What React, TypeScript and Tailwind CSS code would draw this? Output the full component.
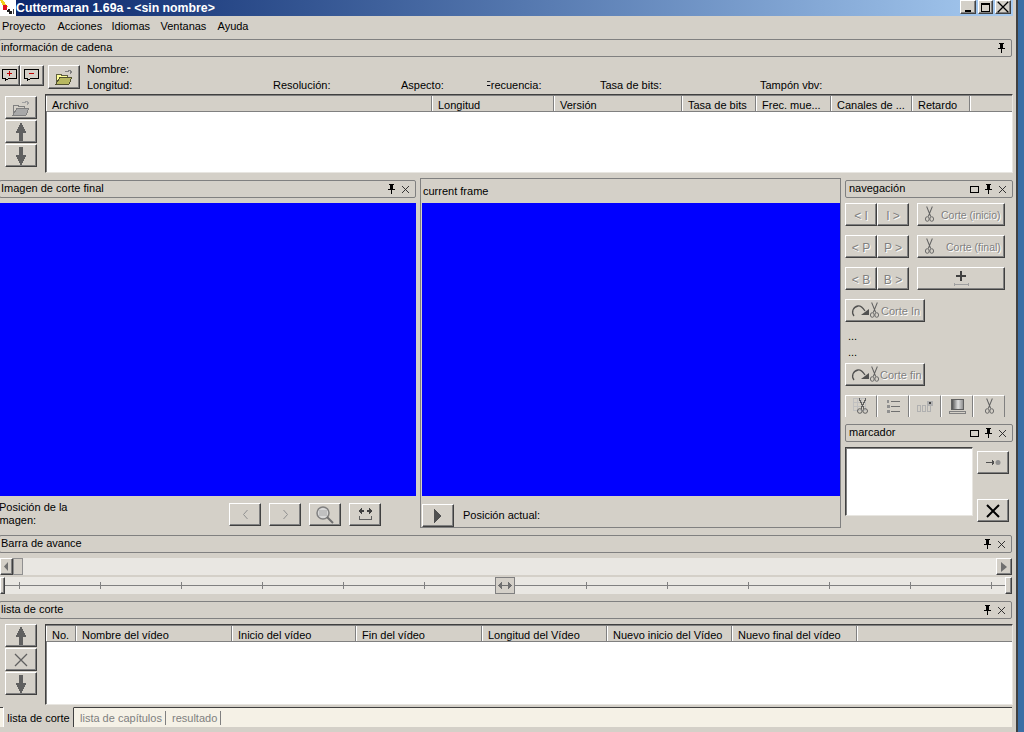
import React from "react";

const raised = "border border-t-white border-l-white border-r-[#404040] border-b-[#404040] shadow-[inset_-1px_-1px_0_#808080]";

function Btn({ w = 32, h = 23, className = "", children }: { w?: number; h?: number; className?: string; children?: React.ReactNode }) {
  return (
    <div className={`${raised} flex shrink-0 items-center justify-center bg-[#d4d0c8] ${className}`} style={{ width: w, height: h }}>
      {children}
    </div>
  );
}

const Pin = () => (
  <svg width="9" height="10" viewBox="0 0 9 10" shapeRendering="crispEdges">
    <path d="M2 0h5v1H6v4h2v1H1V5h2V1H2zM4 6h1v4H4z" fill="#000" />
    <path d="M5 1h1v4H5z" fill="#000" />
  </svg>
);
const Close = () => (
  <svg width="9" height="9" viewBox="0 0 9 9">
    <path d="M1 1l7 7M8 1L1 8" stroke="#222" strokeWidth="0.9" fill="none" />
  </svg>
);
const Float = () => <div className="h-[7px] w-[9px] border border-black" />;

function Dock({ title, w, pin = true, close = true, float = false, left = false }: { title: string; w: number; pin?: boolean; close?: boolean; float?: boolean; left?: boolean }) {
  return (
    <div className={`flex h-[18px] shrink-0 items-center justify-between rounded-[2px] border border-[#808080] pr-[5px] ${left ? "pl-[1px]" : "pl-[3px]"}`} style={{ width: w }}>
      <span className="-translate-y-px text-black">{title}</span>
      <div className="flex items-center gap-[5px]">
        {float && <Float />}
        {pin && <Pin />}
        {close && <Close />}
      </div>
    </div>
  );
}

const Up = ({ c = "#606060" }: { c?: string }) => (
  <svg width="12" height="18" viewBox="0 0 12 18" shapeRendering="crispEdges">
    <path d="M5 0h2v2h1v2h1v2h1v2h1v2H8v8H4v-8H1V8h1V6h1V4h1V2h1z" fill={c} />
  </svg>
);
const Down = ({ c = "#606060" }: { c?: string }) => (
  <svg width="12" height="18" viewBox="0 0 12 18" shapeRendering="crispEdges">
    <path d="M4 0h4v8h3v2h-1v2H9v2H8v2H7v2H5v-2H4v-2H3v-2H2v-2H1V8h3z" fill={c} />
  </svg>
);
const BigX = ({ c = "#000", s = 1.6 }: { c?: string; s?: number }) => (
  <svg width="16" height="16" viewBox="0 0 16 16">
    <path d="M2 2l12 12M14 2L2 14" stroke={c} strokeWidth={s} fill="none" />
  </svg>
);
const FolderOpen = ({ gray = false }: { gray?: boolean }) => (
  <svg width="18" height="16" viewBox="0 0 18 16" shapeRendering="crispEdges">
    <path d="M10 2h3V1h2v1h1v1h1M15 3v2" stroke={gray ? "#a0a0a0" : "#808080"} fill="none" />
    <path d="M1 5h5v1h6v2H5L2 14H1z" fill={gray ? "#d4d0c8" : "#ffff99"} stroke={gray ? "#808080" : "#606040"} strokeWidth="1" />
    <path d="M5 8h12l-3 7H1z" fill={gray ? "#a8a8a8" : "#b8b860"} stroke={gray ? "#808080" : "#505030"} strokeWidth="1" />
  </svg>
);
const Scissors = ({ c = "#606060" }: { c?: string }) => (
  <svg width="9" height="17" viewBox="0 0 11 17" preserveAspectRatio="none" className="shrink-0">
    <path d="M2 0.5l5 10M9 0.5l-5 10" stroke={c} strokeWidth="1.2" fill="none" />
    <circle cx="2.8" cy="13" r="2.3" stroke={c} fill="none" />
    <circle cx="8.2" cy="13" r="2.3" stroke={c} fill="none" />
  </svg>
);
const Curve = () => (
  <svg width="19" height="14" viewBox="0 0 19 14" className="shrink-0">
    <path d="M3 12C0 8 2 3 7 2c3-.5 5 2 7 5" stroke="#505050" strokeWidth="1.3" fill="none" />
    <path d="M10 11h8V5z" fill="#505050" />
  </svg>
);

const dis = "translate-y-px text-[#808080] [text-shadow:1px_1px_0_#fff]";

function HeaderRow({ cols, rest }: { cols: [string, number][]; rest: number }) {
  return (
    <div className="flex h-[16px] shrink-0 border-b border-[#808080] bg-[#d4d0c8]">
      {cols.map(([t, w]) => (
        <div key={t} className="flex shrink-0 items-center truncate border-r border-r-[#808080] border-l border-l-white pt-[4px] pl-[5px] text-black" style={{ width: w }}>
          <span className="whitespace-nowrap">{t}</span>
        </div>
      ))}
      <div className="border-l border-l-white" style={{ width: rest }} />
    </div>
  );
}

function Table({ cols, rest, h }: { cols: [string, number][]; rest: number; h: number }) {
  return (
    <div className="flex w-[968px] flex-col overflow-hidden border border-t-[#404040] border-l-[#404040] border-r-[#e8e6e1] border-b-[#e8e6e1] bg-white shadow-[inset_1px_1px_0_#808080]" style={{ height: h }}>
      <div className="h-[1px] shrink-0" />
      <HeaderRow cols={cols} rest={rest} />
    </div>
  );
}

const Ticks = () => {
  const xs = [19, 100, 181, 262, 343, 424, 586, 667, 748, 829, 910, 991];
  return (
    <>
      {xs.map((x) => (
        <div key={x} className="absolute top-[5px] h-[7px] w-px bg-[#808080]" style={{ left: x }} />
      ))}
    </>
  );
};

const Chevron = ({ dir }: { dir: "l" | "r" }) => (
  <svg width="7" height="11" viewBox="0 0 7 11">
    <path d={dir === "l" ? "M5.5 1L1.5 5.5 5.5 10" : "M1.5 1L5.5 5.5 1.5 10"} stroke="#909090" strokeWidth="1" fill="none" />
  </svg>
);

export default function App() {
  return (
    <div className="flex h-[732px] w-[1024px] overflow-hidden bg-[#d4d0c8] font-['Liberation_Sans',sans-serif] text-[11px] leading-none text-black">
      <div className="flex w-[1016px] shrink-0 flex-col">
        {/* Title bar */}
        <div className="flex h-[16px] w-[1013px] shrink-0 items-center bg-gradient-to-r from-[#0a246a] to-[#a6caf0] pr-[2px]">
          <div className="flex h-[16px] w-[16px] shrink-0 items-center justify-center bg-white">
            <svg width="16" height="16" viewBox="0 0 16 16" shapeRendering="crispEdges">
              <path d="M0 0l3 0 5 7-3 2z" fill="#f0d020" />
              <path d="M3 5h4v5H3z" fill="#e01020" />
              <path d="M8 9h2v2h2v3H9v-2H7v-2h1z" fill="#202020" />
              <path d="M13 9h1v5h-1z" fill="#404040" />
            </svg>
          </div>
          <span className="text-[12.3px] font-bold whitespace-nowrap text-white">Cuttermaran 1.69a - &lt;sin nombre&gt;</span>
          <div className="ml-auto flex items-start self-start">
            <Btn w={16} h={14} className="items-end pb-[1px]"><div className="h-[2px] w-[6px] bg-black" /></Btn>
            <Btn w={15} h={14} className="ml-[2px]"><div className="h-[9px] w-[9px] border border-black border-t-2" /></Btn>
            <Btn w={16} h={14} className="ml-[2px]"><BigX s={1.5} /></Btn>
          </div>
        </div>

        {/* Menu */}
        <div className="flex h-[21px] shrink-0 items-center pl-[2px]">
          <span className="w-[55.5px]">Proyecto</span>
          <span className="w-[54px]">Acciones</span>
          <span className="w-[49px]">Idiomas</span>
          <span className="w-[57px]">Ventanas</span>
          <span>Ayuda</span>
        </div>

        {/* Información de cadena */}
        <div className="mt-[2px] -ml-px">
          <Dock title="información de cadena" w={1013} close={false} left />
        </div>
        <div className="flex h-[37px] shrink-0 items-start">
          <div className="mt-[8px] flex">
            <Btn w={21} h={21} className="-ml-px">
              <svg width="16" height="13" viewBox="0 0 16 13" shapeRendering="crispEdges">
                <path d="M0.5 .5h14v9h-8l-3 2v-2h-3z" stroke="#000" fill="#d4d0c8" />
                <path d="M7 2h1v2h2v1H8v2H7V5H5V4h2z" fill="#c00000" />
              </svg>
            </Btn>
            <Btn w={24} h={21}>
              <svg width="16" height="13" viewBox="0 0 16 13" shapeRendering="crispEdges">
                <path d="M0.5 .5h14v9h-8l-3 2v-2h-3z" stroke="#000" fill="#d4d0c8" />
                <path d="M5 4h5v1H5z" fill="#c00000" />
              </svg>
            </Btn>
            <Btn w={32} h={24} className="ml-[4px]"><FolderOpen /></Btn>
          </div>
          <div className="mt-[4px] ml-[7px] flex flex-col">
            <div className="flex h-[16px] items-center">Nombre:</div>
            <div className="flex h-[16px] items-center">
              <span className="w-[186px]">Longitud:</span>
              <span className="w-[128px]">Resolución:</span>
              <span className="w-[86px]">Aspecto:</span>
              <span className="w-[113px] overflow-hidden"><span className="-ml-[3px] inline-block">Frecuencia:</span></span>
              <span className="w-[160px]">Tasa de bits:</span>
              <span>Tampón vbv:</span>
            </div>
          </div>
        </div>

        {/* Files table */}
        <div className="flex h-[84px] shrink-0 items-start">
          <div className="mt-[2px] ml-[5px] flex w-[40px] shrink-0 flex-col gap-[1px]">
            <Btn><FolderOpen gray /></Btn>
            <Btn><Up /></Btn>
            <Btn><Down /></Btn>
          </div>
          <Table
            h={79}
            rest={41}
            cols={[
              ["Archivo", 386],
              ["Longitud", 122],
              ["Versión", 128],
              ["Tasa de bits", 74],
              ["Frec. mue...", 75],
              ["Canales de ...", 81],
              ["Retardo", 58],
            ]}
          />
        </div>

        {/* Main panels */}
        <div className="flex h-[357px] shrink-0 items-start">
          <div className="flex w-[420px] shrink-0 flex-col pt-[2px]">
            <div className="-ml-px"><Dock title="Imagen de corte final" w={417} float={false} left /></div>
            <div className="mt-[5px] h-[293px] w-[416px] bg-[#0000ff]" />
            <div className="flex h-[31px] items-start">
              <div className="mt-[6px] -ml-px flex w-[230px] shrink-0 flex-col gap-[2px] leading-[11px]">
                <span>Posición de la</span>
                <span className="-ml-[1px]"><span className="-ml-[1px]">imagen:</span></span>
              </div>
              <div className="mt-[7px] flex gap-[8px]">
                <Btn><Chevron dir="l" /></Btn>
                <Btn><Chevron dir="r" /></Btn>
                <Btn>
                  <svg width="20" height="18" viewBox="0 0 20 18">
                    <circle cx="8" cy="7" r="6" fill="#d8d8d8" stroke="#808080" strokeWidth="1.5" />
                    <path d="M4 7h8M4 5h8M4 9h8" stroke="#a8a8a8" />
                    <path d="M12 11l6 6" stroke="#707070" strokeWidth="2" />
                  </svg>
                </Btn>
                <Btn>
                  <svg width="17" height="14" viewBox="0 0 17 14" shapeRendering="crispEdges">
                    <path d="M4 0h1v6H4zM3 1h1v4H3zM2 2h1v2H2zM5 2h2v2H5zM12 0h1v6h-1zM13 1h1v4h-1zM14 2h1v2h-1zM10 2h2v2h-2z" fill="#404040" />
                    <path d="M2 8h1v3h11V8h1v4H2z" fill="#606060" />
                  </svg>
                </Btn>
              </div>
            </div>
          </div>

          <div className="flex h-[350px] w-[421px] shrink-0 flex-col border border-[#808080] pl-[1px]">
            <div className="flex h-[24px] shrink-0 items-center pt-[1px] pl-[1px]">current frame</div>
            <div className="h-[293px] w-[418px] bg-[#0000ff]" />
            <div className="mt-[8px] flex h-[23px] items-center">
              <Btn>
                <svg width="10" height="14" viewBox="0 0 10 14" shapeRendering="crispEdges"><path d="M1 0l8 7-8 7z" fill="#505050" /></svg>
              </Btn>
              <span className="ml-[9px]">Posición actual:</span>
            </div>
          </div>

          <div className="ml-[4px] flex w-[168px] shrink-0 flex-col pt-[2px]">
            <Dock title="navegación" w={168} float />
            <div className="mt-[5px] flex h-[23px]">
              <Btn><span className={`${dis} text-[12px]`}>&lt; I</span></Btn>
              <Btn><span className={`${dis} text-[12px]`}>I &gt;</span></Btn>
              <Btn w={88} className="ml-[8px] justify-start pl-[7px]"><Scissors /><span className={`${dis} ml-[7px] whitespace-nowrap text-[10.5px]`}>Corte (inicio)</span></Btn>
            </div>
            <div className="mt-[9px] flex h-[23px]">
              <Btn><span className={`${dis} text-[12px]`}>&lt; P</span></Btn>
              <Btn><span className={`${dis} text-[12px]`}>P &gt;</span></Btn>
              <Btn w={88} className="ml-[8px] justify-start pl-[7px]"><Scissors /><span className={`${dis} ml-[12px] whitespace-nowrap text-[10.5px]`}>Corte (final)</span></Btn>
            </div>
            <div className="mt-[9px] flex h-[23px]">
              <Btn><span className={`${dis} text-[12px]`}>&lt; B</span></Btn>
              <Btn><span className={`${dis} text-[12px]`}>B &gt;</span></Btn>
              <Btn w={88} className="ml-[8px]">
                <svg width="17" height="15" viewBox="0 0 17 15" shapeRendering="crispEdges">
                  <path d="M7 0h2v4h4v2H9v4H7V6H3V4h4z" fill="#404040" />
                  <path d="M1 12h1v1h13v-1h1v3h-1v-1H2v1H1z" fill="#a0a0a0" />
                </svg>
              </Btn>
            </div>
            <Btn w={80} className="mt-[9px] justify-start pl-[5px]"><Curve /><Scissors /><span className={`${dis} ml-[2px] whitespace-nowrap`}>Corte In</span></Btn>
            <div className="mt-[6px] flex h-[16px] items-center pl-[3px]">...</div>
            <div className="flex h-[16px] items-center pl-[3px]">...</div>
            <Btn w={80} className="mt-[3px] justify-start pl-[5px]"><Curve /><Scissors /><span className={`${dis} ml-[1px] whitespace-nowrap`}>Corte fin</span></Btn>
            <div className="mt-[9px] flex h-[22px]">
              {[
                <svg key="a" width="16" height="17" viewBox="0 0 16 17" shapeRendering="crispEdges"><path d="M.5 .5h12v12H.5zM.5 4.5h12M.5 8.5h12M4.5 .5v12M8.5 .5v12" stroke="#c0c0c0" fill="none" /><g transform="translate(4 0)"><path d="M2 .5l5 10M9 .5l-5 10" stroke="#606060" fill="none" /><circle cx="2.8" cy="13" r="2.3" stroke="#606060" fill="none" shapeRendering="auto" /><circle cx="8.2" cy="13" r="2.3" stroke="#606060" fill="none" shapeRendering="auto" /></g></svg>,
                <svg key="b" width="15" height="15" viewBox="0 0 15 15" shapeRendering="crispEdges"><path d="M1 1h2v3H1zM1 6h3v3H1zM1 11h3v3H1z" fill="#909090" /><path d="M5 2h9v1H5zM5 7h9v1H5zM5 12h9v1H5z" fill="#707070" /></svg>,
                <svg key="c" width="17" height="13" viewBox="0 0 17 13" shapeRendering="crispEdges"><path d="M.5 5.5h3v6h-3zM5.5 5.5h3v6h-3zM10.5 5.5h3v6h-3z" stroke="#b0b0b0" fill="none" /><path d="M10 1h6v5h-6z" fill="#b0b0b0" /><path d="M12 2h2v2h-2z" fill="#404040" /></svg>,
                <svg key="d" width="17" height="16" viewBox="0 0 17 16" shapeRendering="crispEdges"><defs><linearGradient id="g" x1="0" x2="1"><stop offset="0" stopColor="#505050" /><stop offset="0.55" stopColor="#e0e0e0" /><stop offset="1" stopColor="#909090" /></linearGradient></defs><path d="M2 0h13v11H2z" fill="#606060" /><path d="M3 1h11v9H3z" fill="url(#g)" /><path d="M0 12h17v3H0z" fill="#808080" /><path d="M1 13h15v1H1z" fill="#d4d0c8" /></svg>,
                <Scissors key="e" />,
              ].map((icon, i) => (
                <div key={i} className="flex h-[22px] w-[32px] items-center justify-center border-t border-l border-r border-t-white border-l-white border-r-[#808080]">{icon}</div>
              ))}
            </div>
            <div className="mt-[7px]"><Dock title="marcador" w={168} float /></div>
            <div className="mt-[5px] flex items-start">
              <div className="h-[69px] w-[128px] border border-t-[#404040] border-l-[#404040] border-r-[#e8e6e1] border-b-[#e8e6e1] bg-white shadow-[inset_1px_1px_0_#808080]" />
              <div className="mt-[4px] ml-[4px] flex flex-col gap-[25px]">
                <Btn>
                  <svg width="15" height="7" viewBox="0 0 15 7"><path d="M0 3h8v1H0zM6 1h1v5H6zM7 2h1v3H7z" fill="#505050" /><circle cx="12" cy="3.5" r="2.5" fill="#909090" /></svg>
                </Btn>
                <Btn><BigX s={2} /></Btn>
              </div>
            </div>
          </div>
        </div>

        {/* Barra de avance */}
        <div className="-ml-px"><Dock title="Barra de avance" w={1013} left /></div>
        <div className="mt-[5px] flex h-[17px] w-[1012px] shrink-0 items-center bg-[#e9e7e2]">
          <Btn w={13} h={17} className="shrink-0">
            <svg width="5" height="9" viewBox="0 0 5 9"><path d="M4 0L0 4.5 4 9z" fill="#707070" /></svg>
          </Btn>
          <div className="h-[17px] w-[10px] border border-[#909090] bg-[#d4d0c8]" />
          <Btn w={16} h={17} className="ml-auto">
            <svg width="6" height="10" viewBox="0 0 6 10"><path d="M0 0l6 5-6 5z" fill="#707070" /></svg>
          </Btn>
        </div>
        <div className="relative mt-[2px] h-[17px] w-[1012px] shrink-0 bg-[#e9e7e2]">
          <div className="absolute top-[8px] right-0 left-0 h-px bg-[#808080]" />
          <Ticks />
          <Btn w={5} h={17} className="absolute top-0 left-0" />
          <div className="absolute top-0 left-[495px] flex h-[17px] w-[20px] items-center justify-center border border-[#808080] bg-[#d4d0c8]">
            <svg width="14" height="7" viewBox="0 0 14 7" shapeRendering="crispEdges"><path d="M4 0v7L0 3.5zM10 0v7l4-3.5zM4 3h6v1H4z" fill="#707070" /></svg>
          </div>
          <Btn w={7} h={17} className="absolute top-0 right-0" />
        </div>

        {/* Lista de corte */}
        <div className="mt-[7px] -ml-px"><Dock title="lista de corte" w={1013} left /></div>
        <div className="mt-[5px] flex h-[81px] shrink-0 items-start">
          <div className="ml-[5px] flex w-[40px] shrink-0 flex-col gap-[1px]">
            <Btn><Up /></Btn>
            <Btn><BigX c="#606060" s={1.3} /></Btn>
            <Btn><Down /></Btn>
          </div>
          <Table
            h={81}
            rest={154}
            cols={[
              ["No.", 30],
              ["Nombre del vídeo", 156],
              ["Inicio del vídeo", 124],
              ["Fin del vídeo", 126],
              ["Longitud del Vídeo", 125],
              ["Nuevo inicio del Vídeo", 125],
              ["Nuevo final del vídeo", 125],
            ]}
          />
        </div>

        {/* Tabs */}
        <div className="mt-[2px] flex h-[20px] w-[1012px] shrink-0 items-stretch border-t border-t-[#404040] bg-[#f5f1e6]">
          <div className="ml-[3px] -mt-px flex w-[71px] items-center justify-center border-t border-t-[#d4d0c8] border-r border-r-[#404040] border-l border-l-white bg-[#d4d0c8] pt-[2px]">lista de corte</div>
          <div className="flex w-[94px] items-center pt-[1px] pl-[6px] text-[#808080]"><span className="border-r border-[#808080] pr-[3px] leading-[14px]">lista de capítulos</span></div>
          <div className="flex items-center pt-[1px] pl-[4px] text-[#808080]"><span className="border-r border-[#808080] pr-[3px] leading-[14px]">resultado</span></div>
        </div>
      </div>
      <div className="h-full w-[2px] shrink-0 bg-[#404040]" />
      <div className="h-full flex-1 bg-[#3a6ea5]" />
    </div>
  );
}
